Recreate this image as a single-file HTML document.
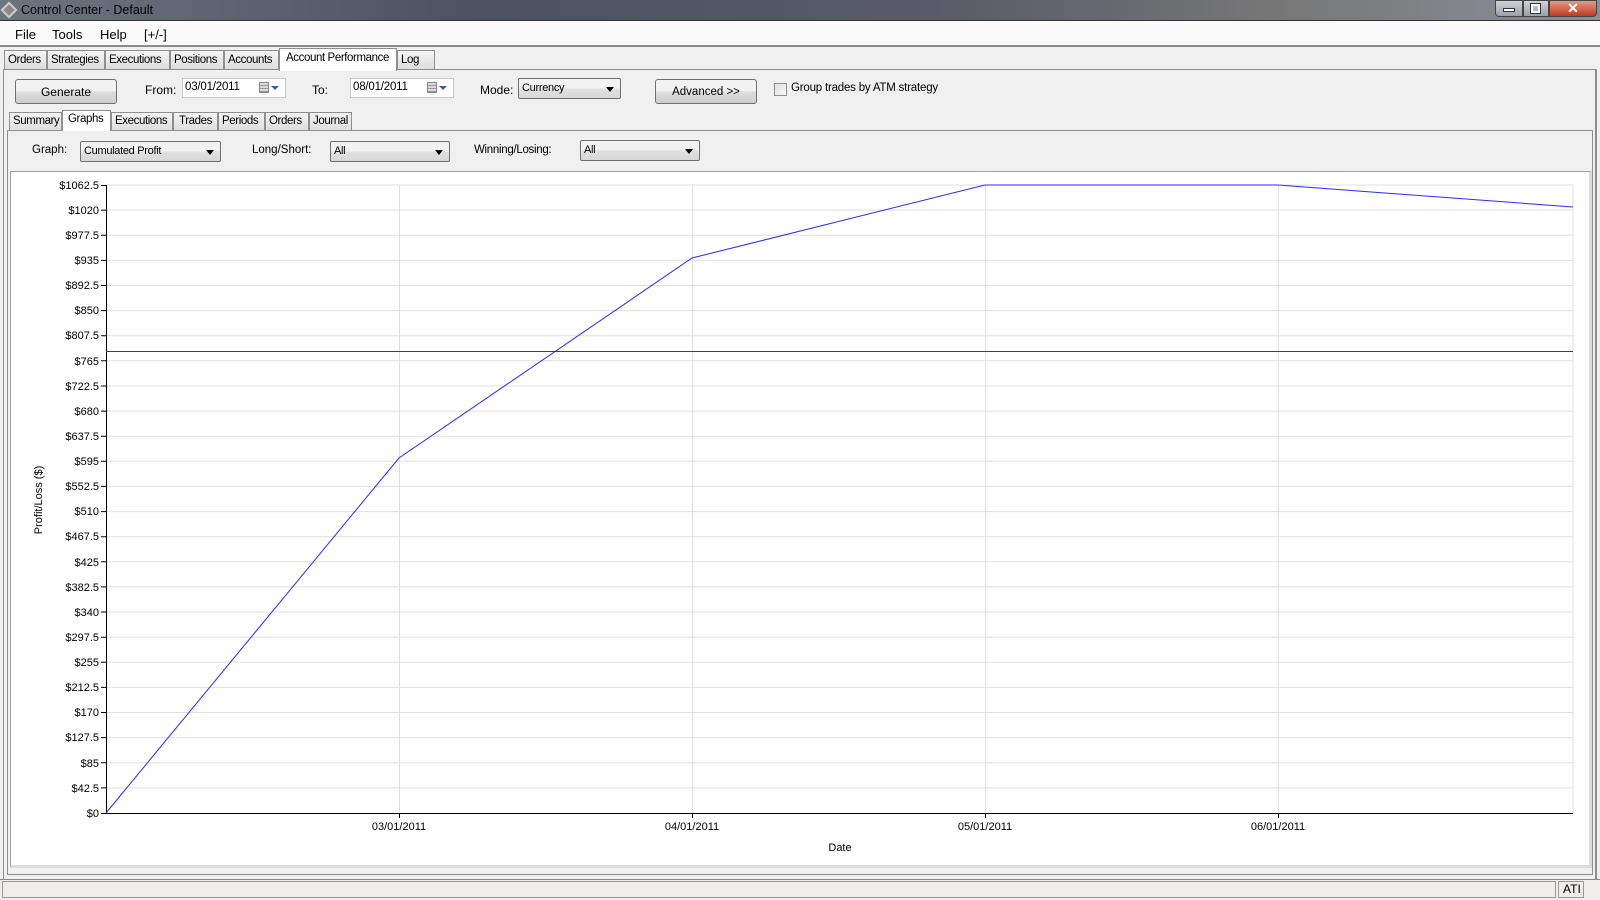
<!DOCTYPE html>
<html><head><meta charset="utf-8"><style>
*{margin:0;padding:0;box-sizing:border-box}
body{width:1600px;height:900px;overflow:hidden;background:#f0f0f0;font-family:"Liberation Sans",Arial,sans-serif;font-size:12px;color:#000;position:relative}
.a{position:absolute}
.title{left:0;top:0;width:1600px;height:21px;background:linear-gradient(90deg,#6d7480,#4b5260 30%,#5a5c68 60%,#777 80%,#8a8f98);border-bottom:1px solid #333}
.menu{left:0;top:21px;width:1600px;height:26px;background:#fafafa;border-bottom:2px solid #8a8a8a}
.tab{position:absolute;top:50px;height:20px;border:1px solid #8e8f8f;border-bottom:none;background:linear-gradient(#f4f4f4,#dcdcdc);padding:3px 0 0 3px;white-space:nowrap;font-size:11.5px;letter-spacing:-0.4px;overflow:hidden}
.stab{position:absolute;top:112px;height:19px;border:1px solid #8e8f8f;border-bottom:none;background:linear-gradient(#f4f4f4,#dcdcdc);padding:2px 0 0 3px;white-space:nowrap;font-size:11.5px;letter-spacing:-0.4px;overflow:hidden}
.btn{position:absolute;border:1px solid #707070;border-radius:3px;background:linear-gradient(#f2f2f2 45%,#dcdcdc 55%,#cfcfcf);text-align:center}
.inp{position:absolute;background:#fff;border:1px solid #c8c8c8;padding:2px 2px;font-size:11.5px;letter-spacing:-0.2px}
.dd{position:absolute;border:1px solid #707070;border-radius:2px;background:linear-gradient(#f2f2f2 45%,#e0e0e0 55%,#d8d8d8);padding:3px 3px;font-size:11px;letter-spacing:-0.3px}
.dd:after{content:"";position:absolute;right:6px;top:8px;border:4px solid transparent;border-top:5px solid #000}
</style></head><body>
<div class="a title"></div>
<div class="a" style="left:3px;top:4px;width:12px;height:12px;transform:rotate(45deg);border:2px solid #ccc;background:#888"></div>
<div class="a" style="left:21px;top:3px;color:#000;font-size:12.5px">Control Center - Default</div>
<div class="a" style="left:1495px;top:0;width:28px;height:17px;border:1px solid #444;border-radius:0 0 0 4px;background:linear-gradient(#cfd3d9,#9aa0aa)"></div>
<div class="a" style="left:1503px;top:8px;width:12px;height:4px;background:#fff;border:1px solid #333"></div>
<div class="a" style="left:1523px;top:0;width:26px;height:17px;border:1px solid #444;background:linear-gradient(#cfd3d9,#9aa0aa)"></div>
<div class="a" style="left:1531px;top:4px;width:9px;height:9px;border:2px solid #fff;outline:1px solid #333"></div>
<div class="a" style="left:1549px;top:0;width:48px;height:17px;border:1px solid #444;border-radius:0 0 4px 0;background:linear-gradient(#e49a86,#c23a20);color:#fff;font-weight:bold;text-align:center;font-size:14px;line-height:15px">✕</div>
<div class="a menu"></div>
<div class="a" style="left:15px;top:27px;font-size:13px">File</div>
<div class="a" style="left:52px;top:27px;font-size:13px">Tools</div>
<div class="a" style="left:100px;top:27px;font-size:13px">Help</div>
<div class="a" style="left:144px;top:27px;font-size:13px">[+/-]</div>
<div class="tab" style="left:4px;width:43px">Orders</div>
<div class="tab" style="left:47px;width:58px">Strategies</div>
<div class="tab" style="left:105px;width:65px">Executions</div>
<div class="tab" style="left:170px;width:54px">Positions</div>
<div class="tab" style="left:224px;width:55px">Accounts</div>
<div class="tab" style="left:279px;top:48px;height:23px;width:118px;background:#fff;z-index:2;padding-left:6px">Account Performance</div>
<div class="tab" style="left:397px;width:38px">Log</div>
<div class="a" style="left:3px;top:69px;width:1594px;height:811px;border:1px solid #8e8f8f;border-right:2px solid #8e8f8f"></div>
<div class="btn" style="left:15px;top:79px;width:102px;height:25px;padding-top:5px">Generate</div>
<div class="a" style="left:145px;top:83px">From:</div>
<div class="inp" style="left:182px;top:78px;width:104px;height:20px">03/01/2011</div>
<div class="a" style="left:259px;top:82px;width:10px;height:11px;border:1px solid #888;background:repeating-linear-gradient(#ddd 0 2px,#999 2px 3px)"></div>
<div class="a" style="left:271px;top:86px;border:4px solid transparent;border-top:4px solid #4a5a80"></div>
<div class="a" style="left:312px;top:83px">To:</div>
<div class="inp" style="left:350px;top:78px;width:104px;height:20px">08/01/2011</div>
<div class="a" style="left:427px;top:82px;width:10px;height:11px;border:1px solid #888;background:repeating-linear-gradient(#ddd 0 2px,#999 2px 3px)"></div>
<div class="a" style="left:439px;top:86px;border:4px solid transparent;border-top:4px solid #4a5a80"></div>
<div class="a" style="left:480px;top:83px">Mode:</div>
<div class="dd" style="left:518px;top:78px;width:103px;height:21px">Currency</div>
<div class="btn" style="left:655px;top:79px;width:102px;height:25px;padding-top:6px;font-size:11.5px">Advanced &gt;&gt;</div>
<div class="a" style="left:774px;top:83px;width:13px;height:13px;border:1px solid #8e8f8f;background:linear-gradient(135deg,#ddd,#fafafa)"></div>
<div class="a" style="left:791px;top:82px;font-size:11.5px;letter-spacing:-0.2px">Group trades by ATM strategy</div>
<div class="stab" style="left:9px;width:53px">Summary</div>
<div class="stab" style="left:62px;top:110px;height:21px;width:49px;background:#fff;z-index:2;padding-left:5px">Graphs</div>
<div class="stab" style="left:111px;width:62px">Executions</div>
<div class="stab" style="left:173px;width:45px;padding-left:5px">Trades</div>
<div class="stab" style="left:218px;width:47px">Periods</div>
<div class="stab" style="left:265px;width:44px">Orders</div>
<div class="stab" style="left:309px;width:43px">Journal</div>
<div class="a" style="left:7px;top:130px;width:1586px;height:745px;border:1px solid #8e8f8f"></div>
<div class="a" style="left:32px;top:144px;font-size:11.5px">Graph:</div>
<div class="dd" style="left:80px;top:141px;width:141px;height:21px">Cumulated Profit</div>
<div class="a" style="left:252px;top:144px;font-size:11.5px">Long/Short:</div>
<div class="dd" style="left:330px;top:141px;width:120px;height:21px">All</div>
<div class="a" style="left:474px;top:144px;font-size:11.5px;letter-spacing:-0.3px">Winning/Losing:</div>
<div class="dd" style="left:580px;top:140px;width:120px;height:21px">All</div>
<div class="a" style="left:10px;top:171px;width:1582px;height:697px;border:1px solid #a0a0a0;border-bottom:3px solid #ddd;border-right:3px solid #ddd;background:#fff"></div>
<svg class="a" style="left:0;top:0" width="1600" height="900" font-family="Liberation Sans,Arial,sans-serif" font-size="11">
<path stroke="#e0e0e0" stroke-width="1" fill="none" d="M106 787.9H1573M106 762.8H1573M106 737.6H1573M106 712.5H1573M106 687.4H1573M106 662.3H1573M106 637.2H1573M106 612H1573M106 586.9H1573M106 561.8H1573M106 536.7H1573M106 511.6H1573M106 486.4H1573M106 461.3H1573M106 436.2H1573M106 411.1H1573M106 386H1573M106 360.8H1573M106 335.7H1573M106 310.6H1573M106 285.5H1573M106 260.4H1573M106 235.2H1573M106 210.1H1573M106 185H1573M399.5 185V813M692.5 185V813M985.5 185V813M1278.5 185V813M1573 185V813"/>
<path stroke="#000" stroke-width="1" fill="none" d="M106.5 185V813.5M101 813.5H1573M101 787.9h5M101 762.8h5M101 737.6h5M101 712.5h5M101 687.4h5M101 662.3h5M101 637.2h5M101 612h5M101 586.9h5M101 561.8h5M101 536.7h5M101 511.6h5M101 486.4h5M101 461.3h5M101 436.2h5M101 411.1h5M101 386h5M101 360.8h5M101 335.7h5M101 310.6h5M101 285.5h5M101 260.4h5M101 235.2h5M101 210.1h5M101 185.5h5M399.5 813v5M692.5 813v5M985.5 813v5M1278.5 813v5"/>
<g text-anchor="end" fill="#000">
<text x="99" y="817">$0</text><text x="99" y="792">$42.5</text><text x="99" y="767">$85</text><text x="99" y="741">$127.5</text><text x="99" y="716">$170</text><text x="99" y="691">$212.5</text><text x="99" y="666">$255</text><text x="99" y="641">$297.5</text><text x="99" y="616">$340</text><text x="99" y="591">$382.5</text><text x="99" y="566">$425</text><text x="99" y="540">$467.5</text><text x="99" y="515">$510</text><text x="99" y="490">$552.5</text><text x="99" y="465">$595</text><text x="99" y="440">$637.5</text><text x="99" y="415">$680</text><text x="99" y="390">$722.5</text><text x="99" y="365">$765</text><text x="99" y="339">$807.5</text><text x="99" y="314">$850</text><text x="99" y="289">$892.5</text><text x="99" y="264">$935</text><text x="99" y="239">$977.5</text><text x="99" y="214">$1020</text><text x="99" y="189">$1062.5</text>
</g>
<g text-anchor="middle"><text x="399" y="830">03/01/2011</text><text x="692" y="830">04/01/2011</text><text x="985" y="830">05/01/2011</text><text x="1278" y="830">06/01/2011</text><text x="840" y="851">Date</text></g>
<text transform="translate(42,500) rotate(-90)" text-anchor="middle">Profit/Loss ($)</text>
<path stroke="#2a2aff" stroke-width="1" fill="none" d="M106 813L399 458L692 258L985 185L1278 185L1573 207M106 351.5H1573"/>
</svg>
<div class="a" style="left:0;top:879px;width:1600px;height:21px;background:#f0eded;border-top:1px solid #888"></div>
<div class="a" style="left:2px;top:881px;width:1554px;height:17px;border:1px solid #999;background:#f0eded"></div>
<div class="a" style="left:1558px;top:881px;width:26px;height:17px;border:1px solid #999;padding-left:4px;font-size:12px">ATI</div>
</body></html>
